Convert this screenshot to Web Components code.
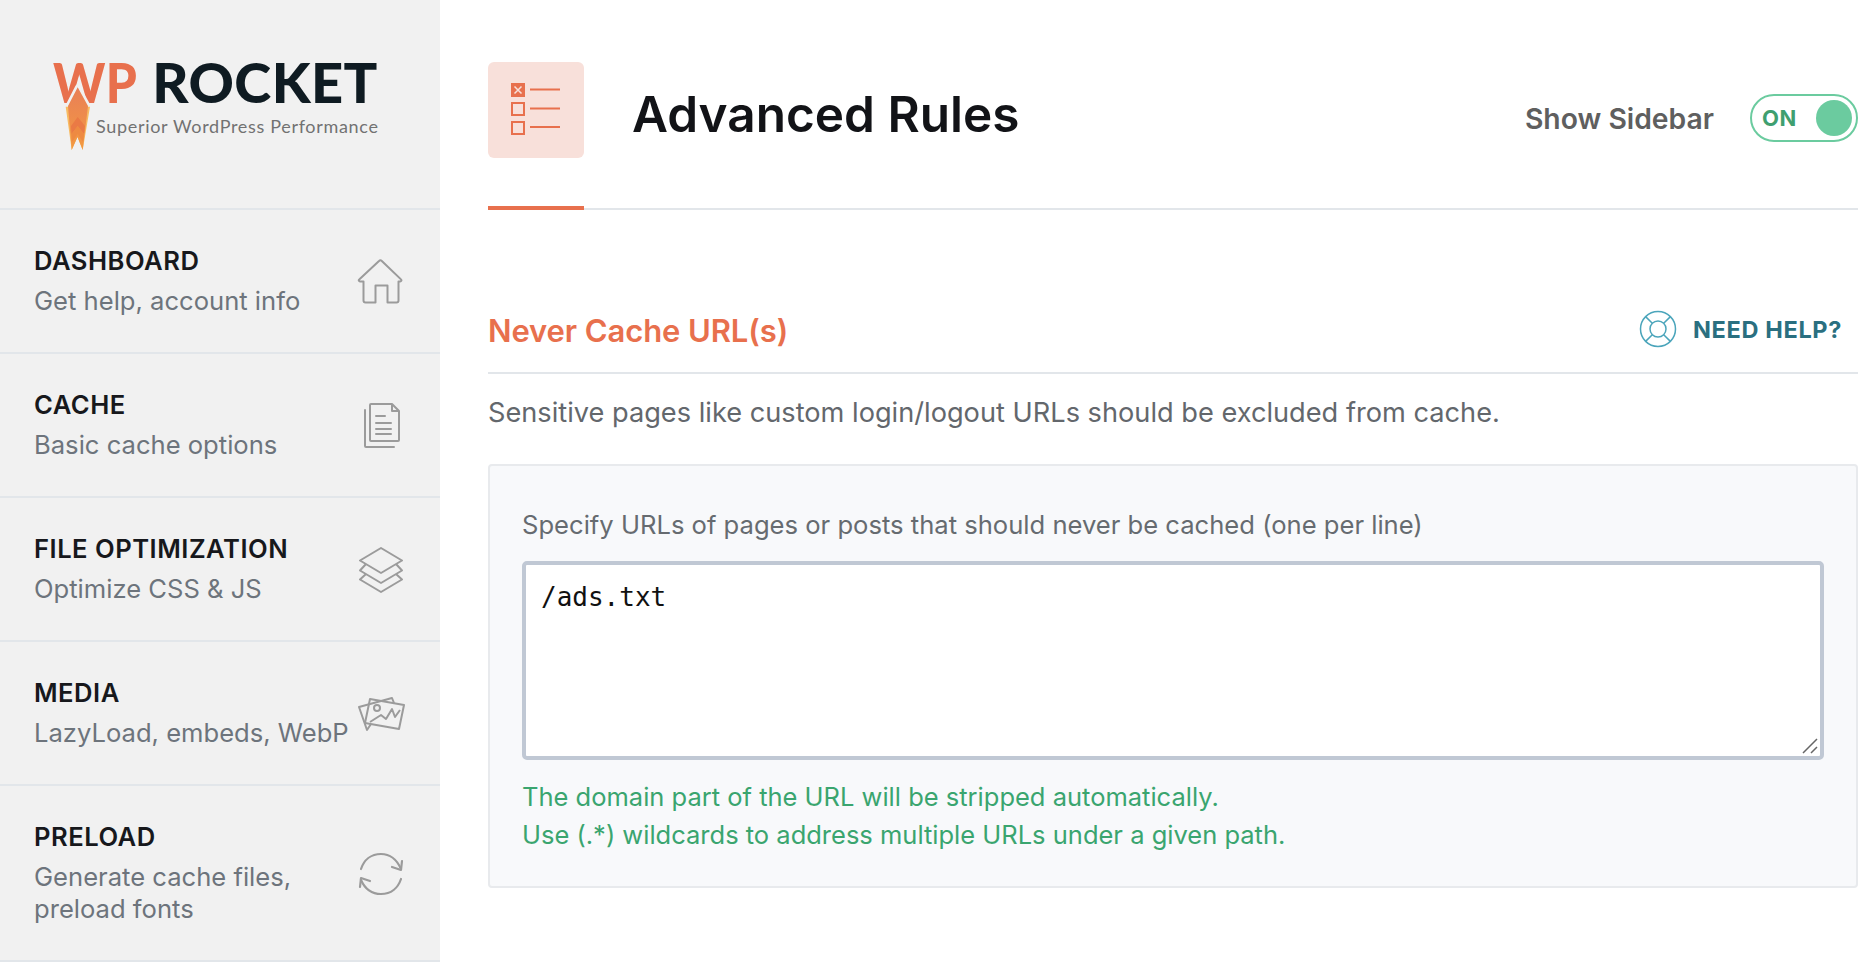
<!DOCTYPE html>
<html lang="en"><head><meta charset="utf-8"><title>Advanced Rules</title>
<style>
html,body{margin:0;padding:0;background:#fff;font-family:Inter,"Liberation Sans",sans-serif}
body{display:flex;align-items:flex-start;width:1864px;height:980px;overflow:hidden}
</style></head><body>
<wp-sidebar>
  <wp-logo></wp-logo>
  <nav-item heading="DASHBOARD" sub="Get help, account info"><svg width="48" height="46" viewBox="0 0 48 46" fill="none" stroke="#9b9b9b" stroke-width="2" stroke-linejoin="round"><path d="M7 23H3.500a1.200 1.200 0 0 1-.8-2.100L22.500 2.500a2 2 0 0 1 2.800 0L44.500 20.900a1.200 1.200 0 0 1-.8 2.100H42V42a2 2 0 0 1-2 2H31V27H19V44H9a2 2 0 0 1-2-2Z" transform="translate(-.5 -.5)"/></svg></nav-item>
  <nav-item heading="CACHE" sub="Basic cache options"><svg width="48" height="46" viewBox="0 0 48 46" fill="none" stroke="#9b9b9b" stroke-width="2" stroke-linejoin="round" stroke-linecap="round"><path d="M14 1h21l7 7v29a1 1 0 0 1-1 1H14a1 1 0 0 1-1-1V2a1 1 0 0 1 1-1ZM35 1v7h7"/><path d="M8 7V43a1 1 0 0 0 1 1H37M19 13h9M19 20h15M19 26h15M19 31h15"/></svg></nav-item>
  <nav-item heading="FILE OPTIMIZATION" sub="Optimize CSS &amp; JS"><svg width="48" height="46" viewBox="0 0 48 46" fill="none" stroke="#9b9b9b" stroke-width="2" stroke-linejoin="round"><path d="M24 1 45 13.500 24 26 3 13.500Z"/><path d="M9 17 3 23.500 24 36 45 23.500 39 17"/><path d="M9 27 3 32.500 24 45 45 32.500 39 27"/></svg></nav-item>
  <nav-item heading="MEDIA" sub="LazyLoad, embeds, WebP"><svg width="48" height="36" viewBox="0 0 48 36" fill="none" stroke="#9b9b9b" stroke-width="2" stroke-linejoin="round"><path d="M14 28 10 34 2 11 35 2 37 7"/><path d="M13 3 47 9 42 33 8 27Z"/><circle cx="20" cy="12" r="3"/><path d="M13 26 24 19 29 23 35 13 38 21 43 14"/></svg></nav-item>
  <nav-item heading="PRELOAD" sub="Generate cache files, preload fonts"><svg width="48" height="44" viewBox="0 0 48 44" fill="none" stroke="#9b9b9b" stroke-width="2.200" stroke-linecap="round" stroke-linejoin="round"><path d="M4 17C7 8 14 2 24 2 33 2 40 8 44 17"/><path d="M45 9 44 18 35 15"/><path d="M44 27C41 36 34 42 24 42 15 42 8 37 4 28"/><path d="M3 35 4 26 13 29"/></svg></nav-item>
</wp-sidebar>
<wp-main>
  <page-header heading="Advanced Rules"></page-header>
  <section-head heading="Never Cache URL(s)"></section-head>
  <wp-desc>Sensitive pages like custom login/logout URLs should be excluded from cache.</wp-desc>
  <field-box label="Specify URLs of pages or posts that should never be cached (one per line)" value="/ads.txt">
    <div>The domain part of the URL will be stripped automatically.</div>
    <div>Use (.*) wildcards to address multiple URLs under a given path.</div>
  </field-box>
</wp-main>
<script>
function def(name, html, init){
  customElements.define(name, class extends HTMLElement{
    constructor(){super();const r=this.attachShadow({mode:'open'});r.innerHTML=html;}
    connectedCallback(){ if(init) init(this, this.shadowRoot); }
  });
}
def('wp-sidebar',`<style>:host{display:block;width:440px;background:#f1f1f1;flex:none}</style><slot></slot>`);
def('wp-logo',`<style>
:host{display:block;position:relative;box-sizing:border-box;height:210px;border-bottom:2px solid #e2e6ea;padding:50px 0 0 53px;font-family:Lato,"Liberation Sans",sans-serif}
.big{font-size:56px;line-height:64px;font-weight:900;color:#0f1b22;white-space:nowrap;letter-spacing:.45px}
.wp{color:#e8704d;display:inline-block;transform:scaleX(.886);transform-origin:0 50%;margin-right:-11px}.gap{display:inline-block;width:15px}
.sub{font-size:18px;line-height:22px;color:#727272;margin:1px 0 0 43px;letter-spacing:.68px;white-space:nowrap;font-weight:400}
svg{position:absolute;left:62px;top:84px}
</style><div class="big"><span class="wp">WP</span><span class="gap"></span>ROCKET</div><div class="sub">Superior WordPress Performance</div>
<svg width="32" height="70" viewBox="0 0 32 70"><defs><linearGradient id="g" x1="0" y1="0" x2="0" y2="1"><stop offset="0" stop-color="#e97f57"/><stop offset="1" stop-color="#f39a40"/></linearGradient></defs><path d="M15.700 3 25 20H7Z" fill="#f1f1f1" stroke="#f1f1f1" stroke-width="5" stroke-linejoin="round"/><path d="M3.700 22.700H28L20.700 66 15.500 53 9.700 66Z" fill="#f8bb62"/><path d="M15.700 3.300 26 22 20.700 66 15.500 53 9.700 66 6 22Z" fill="url(#g)"/><path d="M9 42 15.700 33 23 42 22 50 15.700 42 9.500 50Z" fill="#ea7a45"/><path d="M9.500 50 15.700 42 22 50 21 58 15.700 50 10 58Z" fill="#ee8a42"/></svg>`);
def('nav-item',`<style>
:host{display:flex;box-sizing:border-box;min-height:144px;align-items:center;padding:0 34px;border-bottom:2px solid #e2e6ea;justify-content:space-between}
.t{padding:34px 0 35px;flex:1;min-width:0}
.h{font-size:25.600px;line-height:33px;font-weight:600;color:#17181c;letter-spacing:.5px;white-space:nowrap}
.s{font-size:25.600px;line-height:32px;color:#6d747c;margin-top:8px;max-width:320px}
.i{width:48px;display:flex;justify-content:center;flex:none;margin-right:1px;padding-top:2px}
svg{display:block}
</style><div class="t"><div class="h"></div><div class="s"></div></div><div class="i"><slot></slot></div>`,(e,r)=>{r.querySelector('.h').textContent=e.getAttribute('heading');r.querySelector('.s').textContent=e.getAttribute('sub');});
def('wp-main',`<style>:host{display:block;box-sizing:border-box;width:1370px;margin-left:48px;flex:none}</style><slot></slot>`);
def('page-header',`<style>
:host{display:flex;align-items:flex-start;height:210px;box-sizing:border-box;border-bottom:2px solid #e2e6ea}
.tab{width:96px;height:210px;box-sizing:border-box;padding-top:62px;border-bottom:4px solid #e8704d;flex:none}
.box{width:96px;height:96px;background:#f8e0da;border-radius:6px;display:flex;align-items:center;justify-content:center}
.box svg{display:block;margin-bottom:2px}
h1{margin:0 0 0 48px;font-size:49.500px;line-height:60px;font-weight:600;color:#121317;padding-top:84px;flex:1;white-space:nowrap}
.show{font-size:28.300px;font-weight:600;color:#5f5f5f;line-height:36px;margin:101px 36px 0 0;white-space:nowrap}
.tg{margin-top:94px}
</style><div class="tab"><div class="box"><svg width="50" height="52" viewBox="0 0 50 52" fill="none" stroke="#e8704d" stroke-width="2"><rect x="1" y="1" width="12" height="12" fill="#e8704d"/><path d="M3.500 3.500 10.500 10.500M10.500 3.500 3.500 10.500" stroke="#f8e0da" stroke-width="1.500"/><rect x="1" y="20" width="12" height="12"/><rect x="1" y="39" width="12" height="12"/><path d="M19 6.500H49M19 25.500H49M19 44H49"/></svg></div></div><h1></h1><span class="show">Show Sidebar</span><div class="tg"><wp-toggle></wp-toggle></div>`,(e,r)=>{r.querySelector('h1').textContent=e.getAttribute('heading');});
def('wp-toggle',`<style>
:host{display:flex;box-sizing:border-box;width:108px;height:48px;border:2px solid #6bcb9f;border-radius:24px;align-items:center;justify-content:space-between;padding:0 4px 0 10px;background:#fff}
b{font-size:22px;font-weight:700;color:#3f9f70;letter-spacing:.6px}
i{display:block;width:36px;height:36px;border-radius:50%;background:#6bcb9f}
</style><b>ON</b><i></i>`);
def('section-head',`<style>
:host{display:flex;align-items:center;justify-content:space-between;box-sizing:border-box;height:164px;padding-top:80px;border-bottom:2px solid #e2e6ea}
h2{margin:0;font-size:31px;line-height:40px;font-weight:600;color:#e8704d;letter-spacing:-.1px}
a{display:flex;align-items:center;gap:16px;color:#2a6f80;font-size:23.500px;font-weight:700;letter-spacing:.65px;margin:0 16px 4px 0}
svg{display:block}
</style><h2></h2><a><svg width="38" height="38" viewBox="0 0 38 38" fill="none" stroke="#4ba5bb" stroke-width="1.500"><circle cx="19" cy="19" r="17.500"/><circle cx="19" cy="19" r="8"/><path d="M6.600 6.600 13.300 13.300M31.400 6.600 24.700 13.300M6.600 31.400 13.300 24.700M31.400 31.400 24.700 24.700"/></svg>NEED HELP?</a>`,(e,r)=>{r.querySelector('h2').textContent=e.getAttribute('heading');});
def('wp-desc',`<style>:host{display:block;font-size:27.200px;line-height:40px;color:#63676c;padding:19px 0 31px;white-space:nowrap}</style><slot></slot>`);
def('field-box',`<style>
:host{display:block;box-sizing:border-box;height:424px;background:#f8f9fb;border:2px solid #e8eaed;border-radius:4px;padding:43px 32px 0}
.l{font-size:25.600px;line-height:32px;color:#666b70;margin-bottom:20px;white-space:nowrap}
.ta{position:relative;box-sizing:border-box;height:199px;background:#fff;border:4px solid #c0c8d4;border-radius:5px;padding:15px 15px;font-family:"DejaVu Sans Mono","Liberation Mono",monospace;font-size:26px;line-height:34px;color:#111}
.ta svg{position:absolute;right:2px;bottom:2px}
.n{color:#3aa56f;font-size:25.500px;line-height:38px;margin-top:18px;white-space:nowrap}
</style><div class="l"></div><div class="ta"><span class="v"></span><svg width="16" height="16" viewBox="0 0 16 16" stroke="#666" stroke-width="1.500" fill="none"><path d="M1 15 15 1M9 15 15 9"/></svg></div><div class="n"><slot></slot></div>`,(e,r)=>{r.querySelector('.l').textContent=e.getAttribute('label');r.querySelector('.v').textContent=e.getAttribute('value');});
</script>
</body></html>
